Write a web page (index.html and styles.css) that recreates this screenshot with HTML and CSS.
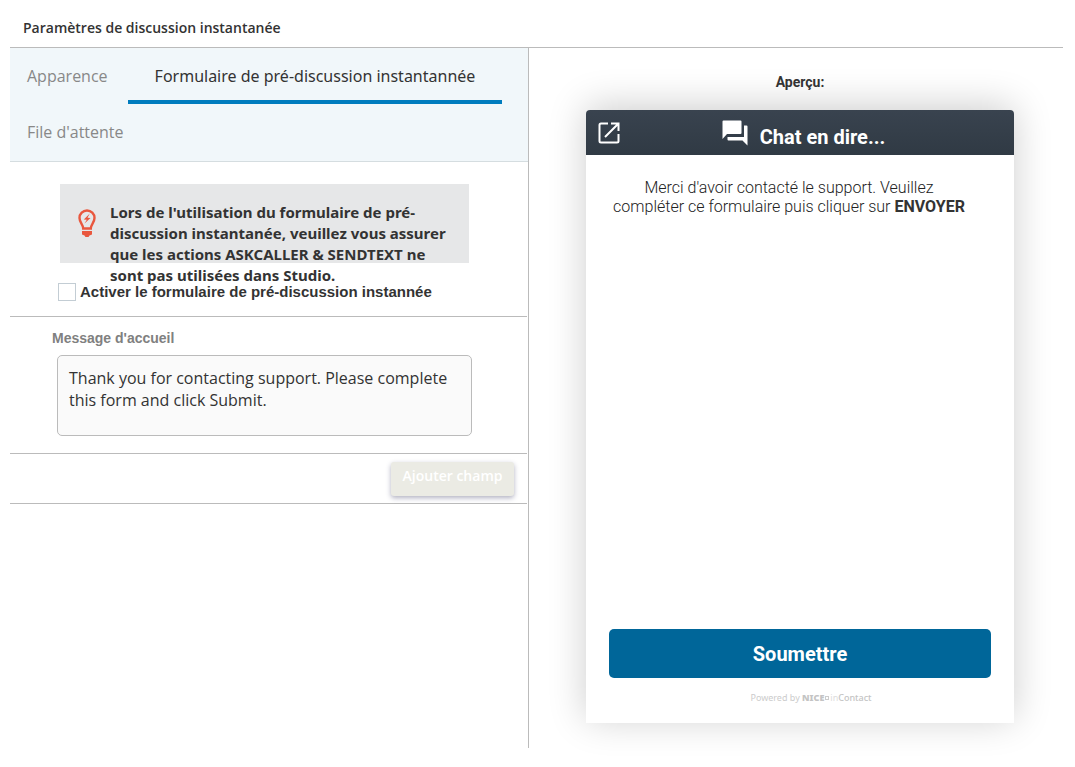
FILE: index.html
```html
<!DOCTYPE html>
<html lang="fr">
<head>
<meta charset="utf-8">
<meta name="viewport" content="width=device-width, initial-scale=1">
<title>Paramètres de discussion instantanée</title>
<link rel="stylesheet" href="styles.css">
</head>
<body>
<header class="page-header"><h1 class="page-title">Paramètres de discussion instantanée</h1></header>
<main class="columns">
  <section class="settings">
    <nav class="tabs">
      <a class="tab" href="#apparence">Apparence</a>
      <a class="tab tab-active" href="#formulaire" aria-current="page">Formulaire de pré-discussion instantannée</a>
      <a class="tab" href="#file">File d'attente</a>
    </nav>
    <div class="enable">
      <div class="notice">
        <svg class="bulb" viewBox="0 0 18 29" aria-hidden="true">
          <path d="M5.200 19.500C5.200 15.500 1.500 13.500 1.500 9a7.500 7.500 0 0 1 15 0c0 4.500-3.700 6.500-3.700 10.500z" fill="none" stroke="#e9573e" stroke-width="2.400"/>
          <path d="M11.800 4.500 5.800 10.500l3 .3L6.500 14.500l6-5.500-3-.3zM4 22h10v3.500l-2.500 1-1 1.500h-3l-1-1.500-2.500-1z" fill="#e9573e"/>
        </svg>
        <p class="notice-text">Lors de l'utilisation du formulaire de pré-discussion instantanée, veuillez vous assurer que les actions ASKCALLER &amp; SENDTEXT ne sont pas utilisées dans Studio.</p>
      </div>
      <label class="check"><input class="check-box" type="checkbox">Activer le formulaire de pré-discussion instannée</label>
    </div>
    <div class="welcome">
      <label class="field-label" for="message">Message d'accueil</label>
      <textarea class="message" id="message">Thank you for contacting support. Please complete this form and click Submit.</textarea>
    </div>
    <div class="actions"><button class="add-field" type="button">Ajouter champ</button></div>
  </section>
  <section class="preview">
    <h2 class="preview-title">Aperçu:</h2>
    <div class="chat">
      <div class="chat-header">
        <button class="popout" type="button" aria-label="Ouvrir dans une fenêtre">
          <svg class="popout-icon" viewBox="0 0 22 22" aria-hidden="true">
            <path d="M10 1.500H3Q1.500 1.500 1.500 3v16q0 1.500 1.500 1.500h16q1.500 0 1.500-1.500V12M13 1.500h7.500V9M20 2 7 15" fill="none" stroke="#fff" stroke-width="2"/>
          </svg>
        </button>
        <div class="chat-name">
          <svg class="bubbles" viewBox="0 0 26 26" aria-hidden="true">
            <path d="M1.500.5h17q1 0 1 1v11.500q0 1-1 1H5L.5 19V1.500q0-1 1-1zM22 5.500h2.500q1 0 1 1V25.500L20.500 20.500H6.500q-1 0-1-1V17H22z" fill="#fff"/>
          </svg>
          <span class="chat-title">Chat en dire...</span>
        </div>
      </div>
      <p class="chat-message">Merci d'avoir contacté le support. Veuillez compléter ce formulaire puis cliquer sur <b class="strong">ENVOYER</b></p>
      <div class="chat-footer">
        <button class="submit" type="button">Soumettre</button>
        <p class="powered">Powered by <span class="nice">NICE</span><span class="box"></span><span class="in">in</span><span class="contact">Contact</span></p>
      </div>
    </div>
  </section>
</main>
</body>
</html>
```
FILE: styles.css
```css
* { box-sizing: border-box; }
body {
  margin: 0;
  padding: 0 12px 19px 10px;
  background: #fff;
  color: #333;
  font-family: "Open Sans", "Noto Sans", sans-serif;
}
h1, h2, p { margin: 0; }
button { font: inherit; border: 0; padding: 0; cursor: pointer; }
.page-header { padding: 18px 13px 9px; border-bottom: 1px solid #bbb; }
.page-title { font-size: 14px; line-height: 20px; font-weight: 600; }
.columns { display: grid; grid-template-columns: 519fr 534fr; min-height: 700px; }
.settings { border-right: 1px solid #bbb; }
.tabs {
  display: flex;
  flex-wrap: wrap;
  background: #f1f7fa;
  border-bottom: 1px solid #d5dde0;
  padding-bottom: 1px;
}
.tab {
  height: 56px;
  padding: 0 17px;
  color: #888;
  font-size: 16px;
  line-height: 56px;
  text-decoration: none;
}
.tab-active {
  margin-left: 3px;
  padding: 0 27px;
  color: #333;
  font-family: "Noto Sans", sans-serif;
  border-bottom: 4px solid #007cbe;
}
.enable { padding: 22px 58px 15px 48px; margin-right: 1px; border-bottom: 1px solid #bbb; }
.notice {
  display: flex;
  height: 79px;
  margin-left: 2px;
  padding: 18px 14px 0 18px;
  gap: 14px;
  background: #e6e7e8;
}
.bulb { flex: none; width: 18px; height: 29px; margin-top: 7px; }
.notice-text { font: 700 15px/21px "Noto Sans", sans-serif; }
.check {
  display: flex;
  align-items: center;
  gap: 4px;
  margin-top: 20px;
  font: 700 15px/18px "Liberation Sans", Arial, sans-serif;
}
.check-box { appearance: none; width: 18px; height: 18px; margin: 0; border: 1px solid #c3cdd4; background: #fff; }
.welcome { padding: 12px 55px 17px 47px; margin-right: 1px; border-bottom: 1px solid #bbb; }
.field-label {
  display: block;
  margin: 0 0 8px -5px;
  color: #808080;
  font: 700 14px/18px "Liberation Sans", Arial, sans-serif;
}
.message {
  display: block;
  width: 100%;
  height: 81px;
  padding: 11px;
  border: 1px solid #bbb;
  border-radius: 5px;
  background: #fafafa;
  color: #333;
  font: 400 16px/22px "Open Sans", sans-serif;
  resize: none;
}
.actions { display: flex; justify-content: flex-end; margin-right: 1px; padding: 8px 13px 7px; border-bottom: 1px solid #bbb; }
.add-field {
  width: 123px;
  height: 34px;
  padding-bottom: 7px;
  border-radius: 3px;
  background: #ebebe4;
  box-shadow: 0 2px 5px rgba(60, 60, 100, .4);
  color: #fff;
  font-size: 14px;
  font-weight: 600;
}
.preview { padding: 25px 49px 25px 57px; }
.preview-title { font: 700 14px/18px Roboto, sans-serif; text-align: center; }
.chat {
  display: flex;
  flex-direction: column;
  min-height: 613px;
  margin-top: 19px;
  border-radius: 4px 4px 0 0;
  background: #fff;
  box-shadow: 0 -4px 38px rgba(0, 0, 0, .2);
  font-family: Roboto, sans-serif;
}
.chat-header {
  display: grid;
  grid-template-columns: 45px 1fr 38px;
  align-items: center;
  height: 45px;
  border-radius: 4px 4px 0 0;
  background: linear-gradient(#39434f, #303a44);
}
.popout { width: 22px; height: 22px; margin-left: 12px; background: none; }
.popout-icon, .bubbles { display: block; }
.chat-name { display: flex; justify-content: center; gap: 12px; padding-top: 4px; }
.bubbles { width: 26px; height: 26px; }
.chat-title { padding-top: 4px; color: #fff; font-size: 20px; line-height: 26px; font-weight: 700; }
.chat-message { padding: 23px 46px 0 24px; color: #222; font-size: 16px; line-height: 19px; font-weight: 300; text-align: center; }
.strong { color: #333; font-weight: 700; }
.chat-footer { margin-top: auto; padding: 0 23px 18px; }
.submit {
  display: block;
  width: 100%;
  height: 49px;
  border-radius: 5px;
  background: #006699;
  color: #fff;
  font-size: 20px;
  font-weight: 700;
}
.powered {
  display: flex;
  align-items: center;
  justify-content: center;
  margin-top: 13px;
  padding-left: 22px;
  color: #ccc;
  font: 400 9px/14px "Noto Sans", sans-serif;
  white-space: pre;
}
.nice { color: #c4c4c4; font-weight: 900; }
.box { width: 4px; height: 4px; margin: 0 1px; border: 1px solid #ccc; }
.in { color: #ddd; }
.contact { color: #c4c4c4; font-weight: 500; }
```
